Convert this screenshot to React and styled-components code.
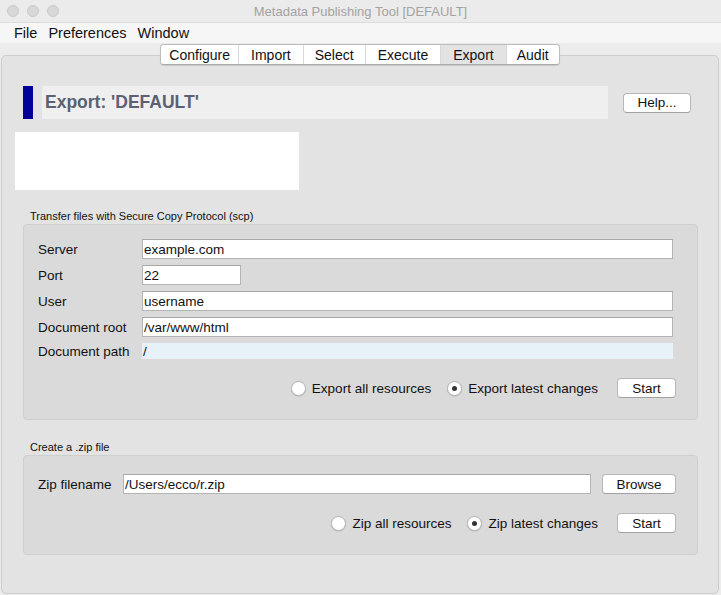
import styled, { createGlobalStyle } from 'styled-components'

const Global = createGlobalStyle`
    html, body {
        margin: 0;
        padding: 0;
        background: #e3e3e3;
    }
    body {
        font-family: "Liberation Sans", Arial, sans-serif;
        color: #111;
    }
    * { box-sizing: border-box; }
`

const Window = styled.div`
    width: 721px;
    height: 595px;
    display: flex;
    flex-direction: column;
    background: #ececec;
    overflow: hidden;
`

const TitleBar = styled.div`
    height: 22px;
    background: #ebebeb;
    position: relative;
    display: flex;
    align-items: center;
    justify-content: center;
    font-size: 13px;
    color: #a3a3a3;
`

const Lights = styled.div`
    position: absolute;
    left: 7px;
    top: 5px;
    display: flex;
    gap: 8px;
`

const Light = styled.span`
    width: 12px;
    height: 12px;
    border-radius: 50%;
    background: #d7d7d7;
    border: 1px solid #cacaca;
`

const MenuBar = styled.div`
    height: 21px;
    background: #f6f6f6;
    border-top: 1px solid #dcdcdc;
    display: flex;
    align-items: center;
    padding-left: 14px;
    gap: 11px;
    font-size: 14.5px;
    color: #111;
`

const Body = styled.div`
    flex: 1;
    display: flex;
    flex-direction: column;
    padding: 1px 2px 1px 1px;
`

const TabBar = styled.div`
    display: flex;
    justify-content: center;
    position: relative;
    z-index: 1;
`

const Tabs = styled.div`
    display: flex;
    background: #fff;
    border: 1px solid #bdbdbd;
    border-bottom-color: #a9a9a9;
    border-radius: 4px;
    overflow: hidden;
    box-shadow: 0 0.5px 1px rgba(0,0,0,0.12);
`

const Tab = styled.div`
    height: 19px;
    padding: 0 ${p => p.$pad}px;
    display: flex;
    align-items: center;
    font-size: 14px;
    color: #111;
    background: ${p => (p.$active ? '#e3e3e3' : '#fff')};
    border-left: ${p => (p.$first ? 'none' : '1px solid #d8d8d8')};
`

const Frame = styled.div`
    flex: 1;
    margin-top: -10px;
    border: 1px solid #cdcdcd;
    border-radius: 5px;
    background: #e3e3e3;
    display: flex;
    flex-direction: column;
    padding-top: 30px;
`

const HeaderRow = styled.div`
    display: flex;
    align-items: center;
    margin-left: 21px;
    height: 33px;
`

const BlueBar = styled.div`
    width: 10px;
    height: 33px;
    background: #020299;
`

const HeaderPanel = styled.div`
    width: 566px;
    height: 33px;
    margin-left: 9px;
    background: #efefef;
    display: flex;
    align-items: center;
    padding-left: 3px;
    font-size: 17.5px;
    font-weight: bold;
    color: #5b6171;
`

const Button = styled.button`
    width: ${p => p.$w}px;
    height: 20px;
    margin-left: ${p => p.$ml || 0}px;
    background: #fff;
    border: 1px solid #b7b7b7;
    border-bottom-color: #a2a2a2;
    border-radius: 4px;
    font-family: inherit;
    font-size: 13.5px;
    color: #111;
    padding: 0;
    flex-shrink: 0;
`

const LogoBox = styled.div`
    width: 284px;
    height: 58px;
    background: #fff;
    margin: 13px 0 0 13px;
`

const GroupLabel = styled.div`
    font-size: 11px;
    line-height: 13px;
    margin: ${p => p.$mt}px 0 1px 28px;
    color: #111;
`

const Panel = styled.div`
    margin: 0 20px 0 21px;
    background: #dadada;
    border: 1px solid #cfcfcf;
    border-radius: 4px;
    padding: ${p => p.$pt}px 21px 21px 14px;
    display: flex;
    flex-direction: column;
`

const Fields = styled.div`
    display: grid;
    grid-template-columns: 104px 1fr;
    row-gap: 6px;
    margin-right: 3px;
    font-size: 13.5px;
`

const Label = styled.div`
    display: flex;
    align-items: center;
`

const FieldCell = styled.div`
    display: flex;
`

const Input = styled.div`
    height: ${p => (p.$plain ? 16 : 20)}px;
    width: ${p => (p.$w ? `${p.$w}px` : 'auto')};
    flex: ${p => (p.$w ? 'none' : 1)};
    background: ${p => (p.$plain ? '#e6f2f8' : '#fff')};
    border: ${p => (p.$plain ? 'none' : '1px solid #b4b4b4')};
    border-top-color: #a8a8a8;
    display: flex;
    align-items: center;
    padding-left: 1px;
    font-size: 13.5px;
    color: #111;
`

const ActionRow = styled.div`
    display: flex;
    justify-content: flex-end;
    align-items: center;
    margin-top: 19px;
    height: 20px;
    font-size: 13.5px;
`

const Radio = styled.label`
    display: flex;
    align-items: center;
    gap: 6px;
    margin-right: ${p => p.$mr}px;
`

const Circle = styled.span`
    width: 15px;
    height: 15px;
    border-radius: 50%;
    background: #fff;
    border: 1px solid #b3b3b3;
    display: flex;
    align-items: center;
    justify-content: center;
    box-shadow: 0 0.5px 1px rgba(0,0,0,0.15);

    &::after {
        content: '';
        width: 5px;
        height: 5px;
        border-radius: 50%;
        background: ${p => (p.$on ? '#333' : 'transparent')};
    }
`

const ZipRow = styled.div`
    display: flex;
    align-items: center;
    font-size: 13.5px;
`

const ZipLabel = styled.div`
    width: 85px;
`

const tabs = [
    ['Configure', 8],
    ['Import', 12],
    ['Select', 11],
    ['Execute', 12],
    ['Export', 12],
    ['Audit', 10],
]

const fields = [
    ['Server', 'example.com'],
    ['Port', '22', 99],
    ['User', 'username'],
    ['Document root', '/var/www/html'],
    ['Document path', '/', null, true],
]

export default function App() {
    return (
        <Window>
            <Global />
            <TitleBar>
                <Lights>
                    <Light />
                    <Light />
                    <Light />
                </Lights>
                Metadata Publishing Tool [DEFAULT]
            </TitleBar>
            <MenuBar>
                <span>File</span>
                <span>Preferences</span>
                <span>Window</span>
            </MenuBar>
            <Body>
                <TabBar>
                    <Tabs>
                        {tabs.map(([name, pad], i) => (
                            <Tab key={name} $pad={pad} $first={i === 0} $active={name === 'Export'}>
                                {name}
                            </Tab>
                        ))}
                    </Tabs>
                </TabBar>
                <Frame>
                    <HeaderRow>
                        <BlueBar />
                        <HeaderPanel>Export: 'DEFAULT'</HeaderPanel>
                        <Button $w={68} $ml={15}>Help...</Button>
                    </HeaderRow>
                    <LogoBox />

                    <GroupLabel $mt={20}>Transfer files with Secure Copy Protocol (scp)</GroupLabel>
                    <Panel $pt={14}>
                        <Fields>
                            {fields.flatMap(([label, value, w, plain]) => [
                                <Label key={label}>{label}</Label>,
                                <FieldCell key={label + '-v'}>
                                    <Input $w={w} $plain={plain}>{value}</Input>
                                </FieldCell>,
                            ])}
                        </Fields>
                        <ActionRow>
                            <Radio $mr={16}><Circle />Export all resources</Radio>
                            <Radio $mr={19}><Circle $on />Export latest changes</Radio>
                            <Button $w={59}>Start</Button>
                        </ActionRow>
                    </Panel>

                    <GroupLabel $mt={21}>Create a .zip file</GroupLabel>
                    <Panel $pt={18}>
                        <ZipRow>
                            <ZipLabel>Zip filename</ZipLabel>
                            <Input>/Users/ecco/r.zip</Input>
                            <Button $w={74} $ml={11}>Browse</Button>
                        </ZipRow>
                        <ActionRow>
                            <Radio $mr={16}><Circle />Zip all resources</Radio>
                            <Radio $mr={19}><Circle $on />Zip latest changes</Radio>
                            <Button $w={59}>Start</Button>
                        </ActionRow>
                    </Panel>
                </Frame>
            </Body>
        </Window>
    )
}
